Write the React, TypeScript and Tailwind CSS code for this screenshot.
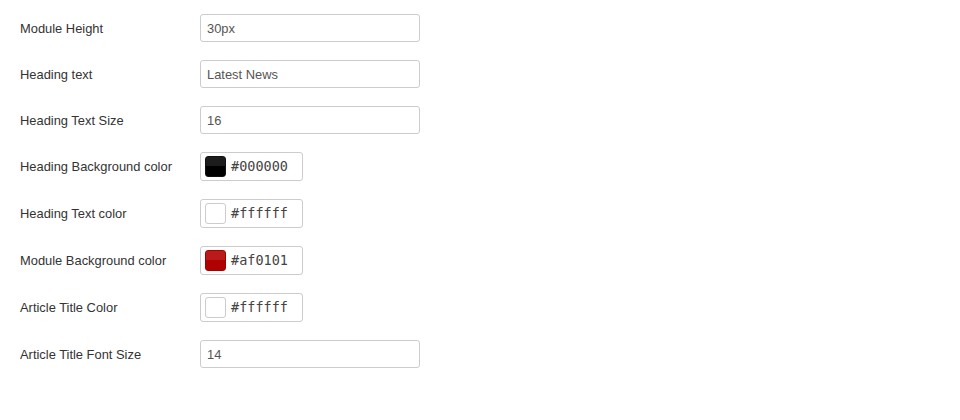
import React from "react";

type Row =
  | { label: string; kind: "text"; value: string; h?: string }
  | { label: string; kind: "color"; value: string; top: string; bottom: string; border: string };

const rows: Row[] = [
  { label: "Module Height", kind: "text", value: "30px" },
  { label: "Heading text", kind: "text", value: "Latest News" },
  { label: "Heading Text Size", kind: "text", value: "16" },
  { label: "Heading Background color", kind: "color", value: "#000000", top: "#1c1c1c", bottom: "#000000", border: "#111111" },
  { label: "Heading Text color", kind: "color", value: "#ffffff", top: "#ffffff", bottom: "#ffffff", border: "#cccccc" },
  { label: "Module Background color", kind: "color", value: "#af0101", top: "#b91b1b", bottom: "#af0101", border: "#a40000" },
  { label: "Article Title Color", kind: "color", value: "#ffffff", top: "#ffffff", bottom: "#ffffff", border: "#cccccc" },
  { label: "Article Title Font Size", kind: "text", value: "14" },
];

export default function App() {
  return (
    <div
      className="w-[960px] h-[420px] bg-white pt-[14px] pl-[20px] flex flex-col gap-[18px]"
      style={{ fontFamily: '"Liberation Sans", Arial, sans-serif' }}
    >
      {rows.map((r, i) => (
        <div key={i} className="flex items-center">
          <div className="w-[180px] text-[12.9px] text-[#333333] leading-none pt-[2px]">{r.label}</div>
          {r.kind === "text" ? (
            <div className="w-[220px] h-[28px] border border-[#cccccc] rounded-[3px] flex items-center pl-[6px] pt-[2px] text-[12.9px] text-[#555555] leading-none">
              {r.value}
            </div>
          ) : (
            <div className="w-[103px] h-[29px] border border-[#cccccc] rounded-[3px] flex items-center pl-[4px]">
              <div
                className="w-[21px] h-[21px] rounded-[3px] border"
                style={{
                  borderColor: r.border,
                  background: `linear-gradient(to bottom, ${r.top} 0%, ${r.top} 50%, ${r.bottom} 50%, ${r.bottom} 100%)`,
                }}
              />
              <span
                className="ml-[5px] pt-[1px] text-[13.5px] text-[#444444] leading-none"
                style={{ fontFamily: '"DejaVu Sans Mono", "Liberation Mono", monospace' }}
              >
                {r.value}
              </span>
            </div>
          )}
        </div>
      ))}
    </div>
  );
}
